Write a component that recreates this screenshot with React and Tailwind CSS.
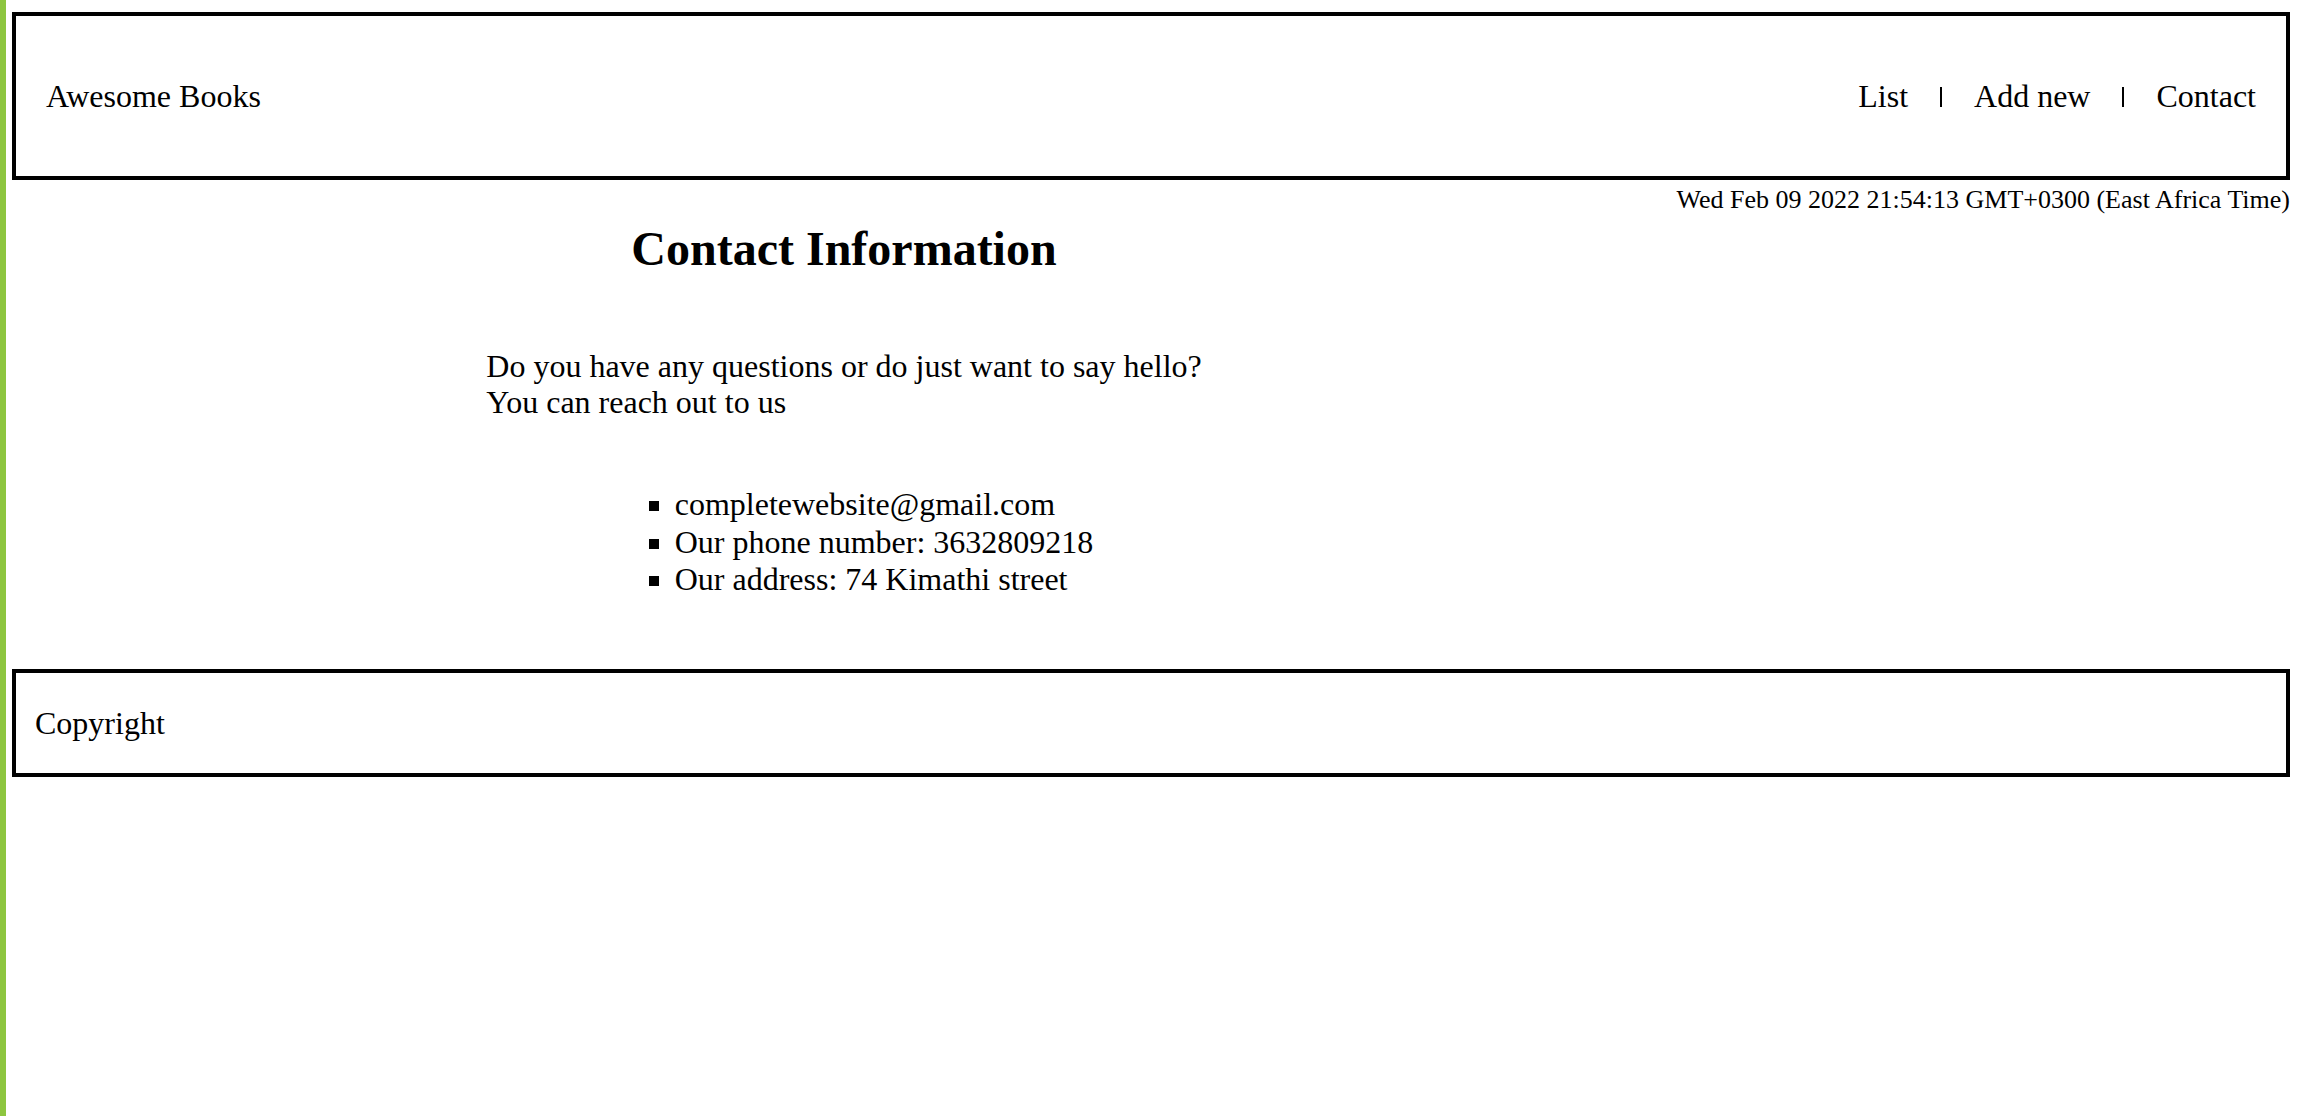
export default function App() {
  return (
    <div className="flex min-h-[1116px] bg-white text-black font-['Liberation_Serif','Times_New_Roman',serif]">
      <div className="w-[6px] shrink-0 bg-[#8dc63f]" />
      <div className="flex-1 pl-[6px] pr-[14px] pt-[12px]">
        <header className="flex h-[168px] items-center justify-between border-4 border-black px-[30px] text-[32px] leading-[36px]">
          <span>Awesome Books</span>
          <nav className="flex items-center gap-[32px]">
            <a href="#list" className="text-black no-underline">List</a>
            <span className="relative top-[1px] inline-block h-[20px] w-[2px] bg-black" />
            <a href="#add" className="text-black no-underline">Add new</a>
            <span className="relative top-[1px] inline-block h-[20px] w-[2px] bg-black" />
            <a href="#contact" className="text-black no-underline">Contact</a>
          </nav>
        </header>
        <div className="mt-[5px] text-right text-[26px] leading-[29px]">
          Wed Feb 09 2022 21:54:13 GMT+0300 (East Africa Time)
        </div>
        <main className="flex w-[1664px] flex-col items-center">
          <h2 className="mt-[7px] text-[48px] font-bold leading-[55px]">Contact Information</h2>
          <p className="mt-[72px] text-[32px] leading-[36px]">
            Do you have any questions or do just want to say hello?
            <br />
            You can reach out to us
          </p>
          <ul className="mt-[66px] list-[square] pl-[80px] text-[32px] leading-[37.5px]">
            <li>completewebsite@gmail.com</li>
            <li>Our phone number: 3632809218</li>
            <li>Our address: 74 Kimathi street</li>
          </ul>
        </main>
        <footer className="mt-[70px] flex h-[108px] items-center border-4 border-black px-[19px] text-[32px] leading-[36px]">
          Copyright
        </footer>
      </div>
    </div>
  );
}
